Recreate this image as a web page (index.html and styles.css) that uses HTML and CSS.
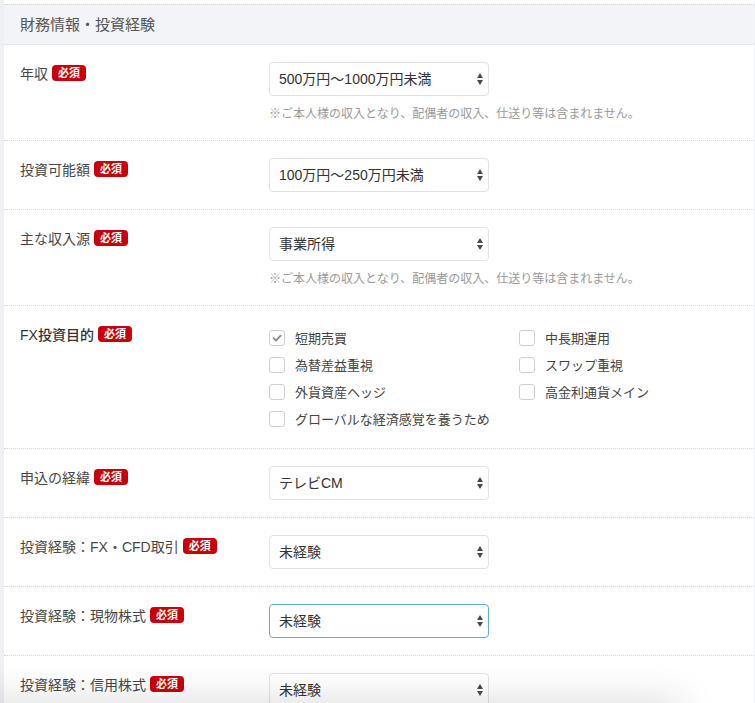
FILE: index.html
```html
<!DOCTYPE html>
<html lang="ja">
<head>
<meta charset="utf-8">
<title>財務情報・投資経験</title>
<link rel="stylesheet" href="styles.css">
</head>
<body>
<div class="page">
  <section class="card">
    <h2 class="card-title">財務情報・投資経験</h2>

    <div class="row row-first">
      <div class="label">年収<span class="req">必須</span></div>
      <div class="field">
        <div class="select-wrap">
          <select class="select"><option>500万円〜1000万円未満</option></select>
          <svg class="arrows" width="6" height="12" viewBox="0 0 6 12"><path d="M3 0 L6 5 L0 5 Z M0 7 L6 7 L3 12 Z" fill="#4a4a4a"/></svg>
        </div>
        <p class="note">※ご本人様の収入となり、配偶者の収入、仕送り等は含まれません。</p>
      </div>
    </div>

    <div class="row">
      <div class="label">投資可能額<span class="req">必須</span></div>
      <div class="field">
        <div class="select-wrap">
          <select class="select"><option>100万円〜250万円未満</option></select>
          <svg class="arrows" width="6" height="12" viewBox="0 0 6 12"><path d="M3 0 L6 5 L0 5 Z M0 7 L6 7 L3 12 Z" fill="#4a4a4a"/></svg>
        </div>
      </div>
    </div>

    <div class="row">
      <div class="label">主な収入源<span class="req">必須</span></div>
      <div class="field">
        <div class="select-wrap">
          <select class="select"><option>事業所得</option></select>
          <svg class="arrows" width="6" height="12" viewBox="0 0 6 12"><path d="M3 0 L6 5 L0 5 Z M0 7 L6 7 L3 12 Z" fill="#4a4a4a"/></svg>
        </div>
        <p class="note">※ご本人様の収入となり、配偶者の収入、仕送り等は含まれません。</p>
      </div>
    </div>

    <div class="row">
      <div class="label label-strong">FX投資目的<span class="req">必須</span></div>
      <div class="field">
        <div class="checks">
          <label class="check"><span class="box"><svg width="14" height="14" viewBox="0 0 14 14"><path d="M3.5 7.2 L6 9.6 L10.6 4.6" fill="none" stroke="#8a8a8a" stroke-width="1.8" stroke-linecap="round" stroke-linejoin="round"/></svg></span>短期売買</label>
          <label class="check"><span class="box"></span>中長期運用</label>
          <label class="check"><span class="box"></span>為替差益重視</label>
          <label class="check"><span class="box"></span>スワップ重視</label>
          <label class="check"><span class="box"></span>外貨資産ヘッジ</label>
          <label class="check"><span class="box"></span>高金利通貨メイン</label>
          <label class="check"><span class="box"></span>グローバルな経済感覚を養うため</label>
        </div>
      </div>
    </div>

    <div class="row">
      <div class="label">申込の経緯<span class="req">必須</span></div>
      <div class="field">
        <div class="select-wrap">
          <select class="select"><option>テレビCM</option></select>
          <svg class="arrows" width="6" height="12" viewBox="0 0 6 12"><path d="M3 0 L6 5 L0 5 Z M0 7 L6 7 L3 12 Z" fill="#4a4a4a"/></svg>
        </div>
      </div>
    </div>

    <div class="row">
      <div class="label">投資経験：FX・CFD取引<span class="req">必須</span></div>
      <div class="field">
        <div class="select-wrap">
          <select class="select"><option>未経験</option></select>
          <svg class="arrows" width="6" height="12" viewBox="0 0 6 12"><path d="M3 0 L6 5 L0 5 Z M0 7 L6 7 L3 12 Z" fill="#4a4a4a"/></svg>
        </div>
      </div>
    </div>

    <div class="row">
      <div class="label">投資経験：現物株式<span class="req">必須</span></div>
      <div class="field">
        <div class="select-wrap">
          <select class="select select-focus"><option>未経験</option></select>
          <svg class="arrows" width="6" height="12" viewBox="0 0 6 12"><path d="M3 0 L6 5 L0 5 Z M0 7 L6 7 L3 12 Z" fill="#4a4a4a"/></svg>
        </div>
      </div>
    </div>

    <div class="row">
      <div class="label">投資経験：信用株式<span class="req">必須</span></div>
      <div class="field">
        <div class="select-wrap">
          <select class="select"><option>未経験</option></select>
          <svg class="arrows" width="6" height="12" viewBox="0 0 6 12"><path d="M3 0 L6 5 L0 5 Z M0 7 L6 7 L3 12 Z" fill="#4a4a4a"/></svg>
        </div>
      </div>
    </div>
  </section>
</div>
<div class="bottom-shade"></div>
</body>
</html>
```

FILE: styles.css
```css
html, body {
  margin: 0;
  padding: 0;
}

body {
  background: #eef0f3;
  font-family: "Liberation Sans", "Noto Sans CJK JP", sans-serif;
  color: #444;
  overflow: hidden;
}

.page {
  padding-left: 4px;
}

.card {
  width: 750px;
  background: #fff;
  padding-top: 4px;
}

.card-title {
  margin: 0;
  height: 39px;
  line-height: 39px;
  padding-left: 16px;
  background: #f3f4f7;
  border-top: 1px dotted #cfd3d9;
  border-bottom: 1px solid #e0e4ea;
  font-size: 15px;
  font-weight: normal;
  color: #555;
}

.row {
  display: grid;
  grid-template-columns: 249px 1fr;
  padding: 17px 0 17px 16px;
  border-top: 1px dotted #d3d7dc;
}

.row-first {
  border-top: none;
}

.label {
  display: flex;
  align-items: center;
  gap: 4px;
  height: 22px;
  font-size: 14px;
  color: #474747;
  white-space: nowrap;
}

.label-strong {
  font-weight: 500;
  color: #333;
}

.req {
  display: inline-block;
  height: 16px;
  line-height: 16px;
  padding: 0 6px;
  border-radius: 4px;
  background: #c8000b;
  color: #fff;
  font-size: 11px;
  font-weight: bold;
}

.select-wrap {
  position: relative;
  width: 220px;
  height: 34px;
}

.select {
  -webkit-appearance: none;
  appearance: none;
  box-sizing: border-box;
  width: 220px;
  height: 34px;
  margin: 0;
  padding: 0 24px 0 9px;
  border: 1px solid #dfe3e8;
  border-radius: 4px;
  background: #fff;
  font-family: inherit;
  font-size: 14px;
  color: #333;
  outline: none;
}

.select-focus {
  border-color: #5fabe8;
}

.arrows {
  position: absolute;
  right: 6px;
  top: 11px;
  pointer-events: none;
}

.note {
  margin: 9px 0 0;
  font-size: 12px;
  line-height: 18px;
  color: #999;
  white-space: nowrap;
}

.checks {
  display: grid;
  grid-template-columns: 250px 250px;
  margin: 1px 0 -1px;
}

.check {
  display: flex;
  align-items: center;
  gap: 10px;
  height: 27px;
  font-size: 13px;
  color: #444;
  white-space: nowrap;
}

.box {
  box-sizing: border-box;
  display: flex;
  align-items: center;
  justify-content: center;
  width: 16px;
  height: 16px;
  border: 1px solid #cfcfcf;
  border-radius: 3px;
  background: #fff;
}

.bottom-shade {
  position: fixed;
  left: -30px;
  bottom: -40px;
  width: 710px;
  height: 40px;
  box-shadow: 0 0 40px rgba(0, 0, 0, 0.16);
  background: #fff;
  z-index: 5;
}
```
